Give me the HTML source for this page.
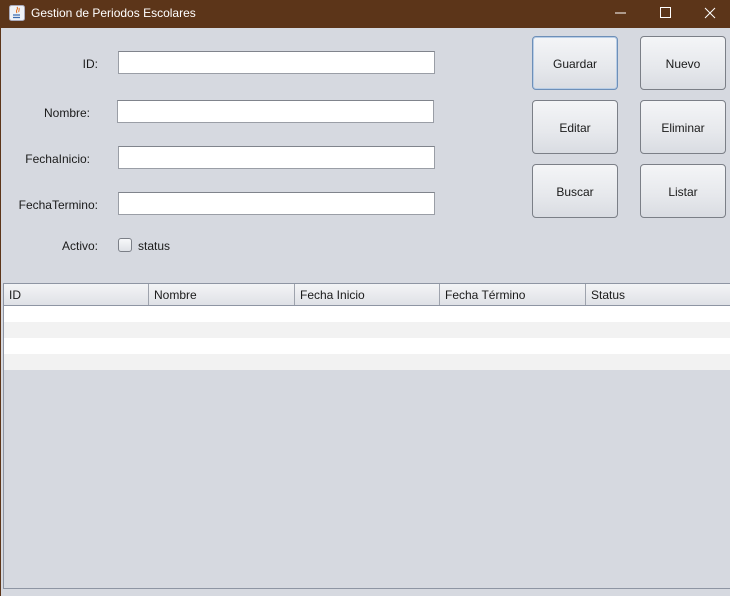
<!DOCTYPE html>
<html><head><style>
*{margin:0;padding:0;box-sizing:border-box}
body{width:730px;height:596px;background:#d6d9e0;font-family:"Liberation Sans",Arial,sans-serif;font-size:12px;color:#1a1a1a;position:relative;overflow:hidden}
.tb{position:absolute;left:0;top:0;width:730px;height:28px;background:#5c3519;color:#fff}
.tb .t{position:absolute;left:31px;top:6px;font-size:12px}
.lb{position:absolute;left:0;top:28px;width:1px;height:568px;background:#5c3519}
.lbl{position:absolute;text-align:right;font-size:12px}
.tf{position:absolute;height:23px;background:#fff;border:1px solid #9a9ea6;border-top-color:#80848c}
.btn{position:absolute;width:86px;height:54px;border:1px solid #7b7f87;border-radius:4px;background:linear-gradient(#f4f5f7,#e6e8ec 60%,#d9dce2);text-align:center;line-height:54px;font-size:12px}
.sp{position:absolute;left:3px;top:283px;width:730px;height:306px;border:1px solid #8e95a3;border-right:none}
.hd{position:absolute;left:0;top:0;width:100%;height:22px;background:linear-gradient(#f3f4f6,#dfe1e6);border-bottom:1px solid #8e95a3}
.hc{position:absolute;top:0;height:21px;border-right:1px solid #9ea3ad;padding-left:5px;line-height:23px;font-size:12px}
.row{position:absolute;left:0;width:100%;height:16px}
</style></head><body>
<div class="tb">
<svg style="position:absolute;left:9px;top:5px" width="16" height="16" viewBox="0 0 16 16"><rect x="0.5" y="0.5" width="15" height="15" rx="2" fill="#eef2f7" stroke="#aab"/><path d="M8 2c2 2-2 3 0 6M10 3c1 2-1 3 0 4" stroke="#e07020" fill="none"/><path d="M4 10h7M4 12.5h7" stroke="#3a6cb0" stroke-width="1.3"/></svg>
<span class="t">Gestion de Periodos Escolares</span>
<svg style="position:absolute;left:610px;top:6px" width="110" height="14"><path d="M5 7h11" stroke="#fff"/><rect x="50.5" y="1.5" width="10" height="10" fill="none" stroke="#fff"/><path d="M95 2l10 10M105 2l-10 10" stroke="#fff"/></svg>
</div>
<div class="lb"></div>

<div class="lbl" style="left:40px;top:57px;width:58px">ID:</div>
<div class="lbl" style="left:20px;top:106px;width:70px">Nombre:</div>
<div class="lbl" style="left:10px;top:152px;width:80px">FechaInicio:</div>
<div class="lbl" style="left:5px;top:198px;width:93px">FechaTermino:</div>
<div class="lbl" style="left:40px;top:239px;width:58px">Activo:</div>
<div style="position:absolute;left:118px;top:238px;width:14px;height:14px;border:1px solid #7b7f87;border-radius:3px;background:linear-gradient(#f7f8fa,#dfe2e7)"></div>
<div style="position:absolute;left:138px;top:239px">status</div>

<div class="tf" style="left:118px;top:51px;width:317px"></div>
<div class="tf" style="left:117px;top:100px;width:317px"></div>
<div class="tf" style="left:118px;top:146px;width:317px"></div>
<div class="tf" style="left:118px;top:192px;width:317px"></div>

<div class="btn" style="left:532px;top:36px;border-color:#6d8fb8;box-shadow:inset 0 0 0 1px #b8cde6">Guardar</div>
<div class="btn" style="left:640px;top:36px">Nuevo</div>
<div class="btn" style="left:532px;top:100px">Editar</div>
<div class="btn" style="left:640px;top:100px">Eliminar</div>
<div class="btn" style="left:532px;top:164px">Buscar</div>
<div class="btn" style="left:640px;top:164px">Listar</div>

<div class="sp">
<div class="hd">
<div class="hc" style="left:0;width:145px">ID</div>
<div class="hc" style="left:145px;width:146px">Nombre</div>
<div class="hc" style="left:291px;width:145px">Fecha Inicio</div>
<div class="hc" style="left:436px;width:146px">Fecha Término</div>
<div class="hc" style="left:582px;width:150px;border:none">Status</div>
</div>
<div class="row" style="top:22px;background:#fff"></div>
<div class="row" style="top:38px;background:#f2f2f2"></div>
<div class="row" style="top:54px;background:#fff"></div>
<div class="row" style="top:70px;background:#f2f2f2"></div>
</div>
</body></html>
